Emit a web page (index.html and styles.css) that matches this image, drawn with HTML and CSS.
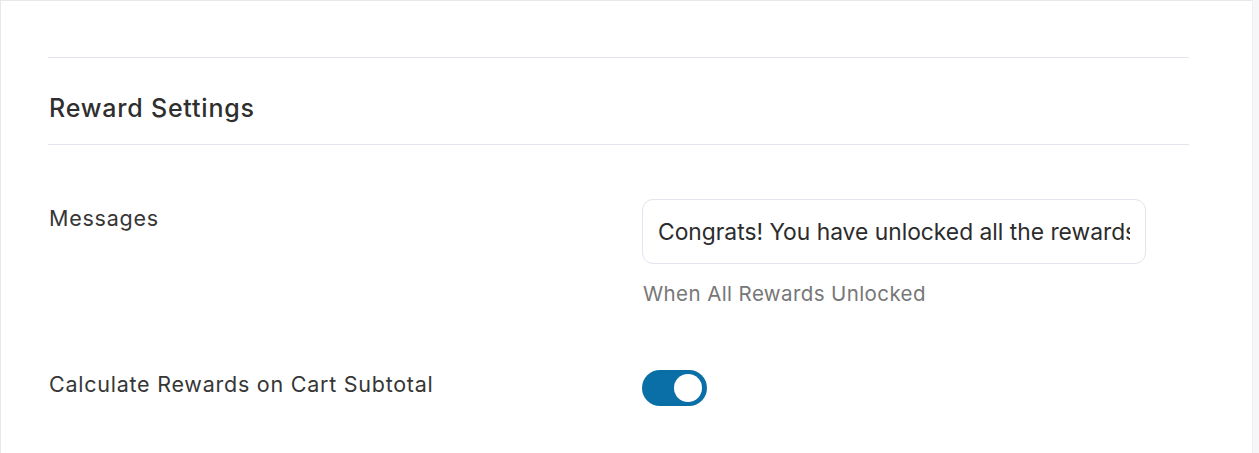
FILE: index.html
```html
<!DOCTYPE html>
<html lang="en">

<head>
    <meta charset="UTF-8" />
    <meta name="viewport" content="width=device-width, initial-scale=1.0" />
    <title>Reward Settings</title>
    <link rel="stylesheet" href="styles.css">
</head>

<body>
    <div class="panel">
        <div class="section">
            <h2 class="section-title">Reward Settings</h2>

            <div class="field">
                <div class="field-label">Messages</div>
                <div class="field-control">
                    <input class="text-input" type="text" value="Congrats! You have unlocked all the rewards!" />
                    <p class="help">When All Rewards Unlocked</p>
                </div>
            </div>

            <div class="field field-toggle">
                <div class="field-label">Calculate Rewards on Cart Subtotal</div>
                <div class="field-control">
                    <label class="toggle">
                        <input type="checkbox" checked />
                        <span class="track"><span class="knob"></span></span>
                    </label>
                </div>
            </div>
        </div>
    </div>
</body>

</html>
```

FILE: styles.css
```css
* {
    box-sizing: border-box;
}

body {
    margin: 0;
    font-family: Inter, "Noto Sans", sans-serif;
    background: #f6f6f8;
    color: #333;
    height: 453px;
    overflow: hidden;
}

.panel {
    width: 1253px;
    height: 453px;
    background: #fff;
    border-top: 1px solid #e8e8ec;
    border-left: 1px solid #e8e8ec;
    border-right: 1px solid #f0f0f3;
    padding: 56px 63px 0 47px;
}

.section {
    border-top: 1px solid #e4e3ef;
}

.section-title {
    margin: 0;
    height: 87px;
    border-bottom: 1px solid #e4e3ef;
    display: flex;
    align-items: center;
    padding: 13px 0 0 1px;
    font-size: 25px;
    font-weight: 500;
    color: #2f2f2f;
    letter-spacing: 0.8px;
}

.field {
    display: flex;
    align-items: flex-start;
}

.field:first-of-type {
    margin-top: 54px;
}

.field + .field {
    margin-top: 63px;
}

.field-label {
    width: 594px;
    font-size: 21.5px;
    line-height: 28px;
    color: #363636;
    padding: 5px 0 0 1px;
    letter-spacing: 0.75px;
}

.field-toggle .field-label {
    padding-top: 0;
}

.field-control {
    flex: 1;
}

.text-input {
    display: block;
    width: 504px;
    height: 65px;
    border: 1px solid #e4e3ee;
    border-radius: 11px;
    padding: 0 15px;
    font-family: inherit;
    font-size: 22.8px;
    letter-spacing: 0;
    color: #2c2c2c;
    background: #fff;
    outline: none;
}

.help {
    margin: 17px 0 0 1px;
    font-size: 20.5px;
    line-height: 26px;
    letter-spacing: 0.4px;
    color: #777;
}

.toggle {
    display: inline-block;
    cursor: pointer;
}

.toggle input {
    display: none;
}

.track {
    display: flex;
    align-items: center;
    width: 65px;
    height: 36px;
    border-radius: 18px;
    background: #0a6fa6;
    padding: 0 5px;
    justify-content: flex-end;
}

.knob {
    width: 28px;
    height: 28px;
    border-radius: 50%;
    background: #fff;
}
```
